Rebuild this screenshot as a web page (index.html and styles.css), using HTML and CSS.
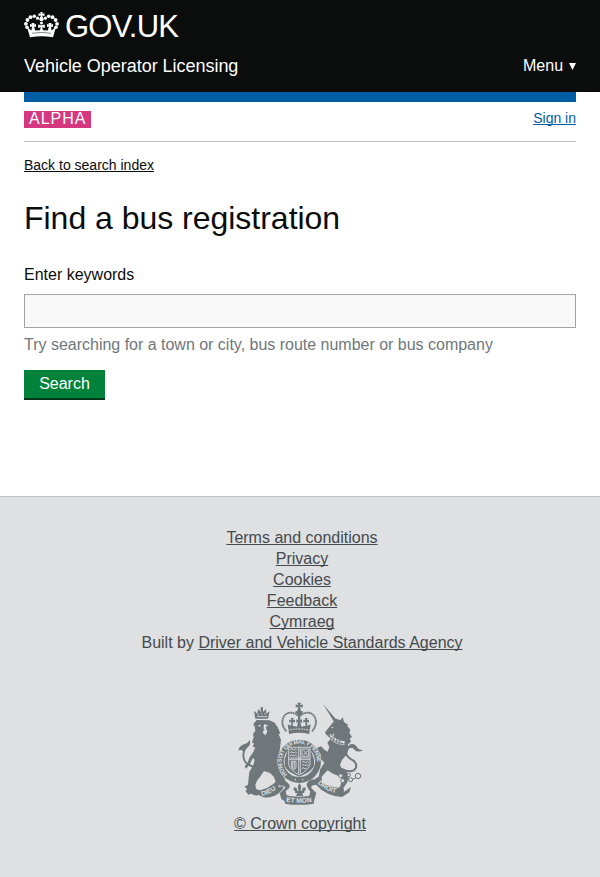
FILE: index.html
```html
<!DOCTYPE html>
<html lang="en">
<head>
<meta charset="utf-8">
<title>Find a bus registration</title>
<link rel="stylesheet" href="styles.css">
</head>
<body>
<header class="header">
  <div class="brand">
    <svg class="crown" viewBox="0 0 35 27" fill="#fff" aria-hidden="true">
      <path d="M16.3 0h2.400l-.5 1.800 2.300-.5v2.600l-2.300-.5.6 2.600h-2.600l.6-2.600-2.300.5V1.300l2.300.5z"/>
      <circle cx="17.500" cy="7.200" r="2.100"/><circle cx="17.500" cy="11" r="1.500"/>
      <circle cx="13.600" cy="6.200" r="1.600"/><circle cx="10.300" cy="4.300" r="1.800"/><circle cx="6.500" cy="5.200" r="1.900"/><circle cx="3.400" cy="8" r="1.900"/><circle cx="1.900" cy="11.800" r="1.900"/><circle cx="3" cy="15.300" r="1.800"/>
      <circle cx="21.400" cy="6.200" r="1.600"/><circle cx="24.700" cy="4.300" r="1.800"/><circle cx="28.500" cy="5.200" r="1.900"/><circle cx="31.600" cy="8" r="1.900"/><circle cx="33.100" cy="11.800" r="1.900"/><circle cx="32" cy="15.300" r="1.800"/>
      <path d="M3 15l4.500 3.500.5-4-2 .5v-3l2 .5-.5-1.500h3l-.5 1.500 2-.5v3l-2-.5 1.300 4 4.700-.3.800-3-2.600.8v-3.500l2.600.7h1.400l2.600-.7V16l-2.600-.8.8 3 4.700.3 1.300-4-2 .5v-3l2 .5-.5-1.500h3l-.5 1.500 2-.5v3l-2-.5.5 4L32 15l-3 10.300q-11.500-2-23 0z"/>
      <path d="M8 21.300q9.500-1.800 19 0" fill="none" stroke="#0b0c0c" stroke-width=".5"/>
    </svg>
    <span class="brand-name">GOV.UK</span>
  </div>
  <div class="service">
    <span class="service-name">Vehicle Operator Licensing</span>
    <span class="menu">Menu <svg class="arrow" viewBox="0 0 7 8" fill="#fff" aria-hidden="true"><path d="M0 0h7L3.500 7z"/></svg></span>
  </div>
</header>
<main class="main">
  <div class="bar"></div>
  <div class="phase"><span class="tag">ALPHA</span><a class="sign-in" href="#">Sign in</a></div>
  <a class="back" href="#">Back to search index</a>
  <h1 class="title">Find a bus registration</h1>
  <form class="form">
    <label class="label" for="keywords">Enter keywords</label>
    <input class="input" id="keywords" type="text">
    <p class="hint">Try searching for a town or city, bus route number or bus company</p>
    <button class="button" type="button">Search</button>
  </form>
</main>
<footer class="footer">
  <ul class="links">
    <li><a href="#">Terms and conditions</a></li>
    <li><a href="#">Privacy</a></li>
    <li><a href="#">Cookies</a></li>
    <li><a href="#">Feedback</a></li>
    <li><a href="#">Cymraeg</a></li>
    <li class="built">Built by <a class="agency" href="#">Driver and Vehicle Standards Agency</a></li>
  </ul>
  <svg class="crest" viewBox="12 6 375 309" fill="#6f777b" aria-hidden="true">
    <defs>
      <path id="ring" d="M160 223A53 53 0 1 1 232 223"/>
      <path id="left" d="M84 288q30-6 54-32"/>
      <path id="base" d="M156 305q42 7 86 0"/>
      <path id="right" d="M251 250q24 24 60 30"/>
    </defs>
    <!-- Lion -->
    <path d="M64 56l-4-24 10 9 2-14 8 9 0-14h7l0 14 9-9 1 14 10-8-5 23z"/>
    <path d="M69 49l31 1M71 41l3 4M81 39l3 4M91 41l5 1" stroke="#dee0e2" stroke-width="2.500"/>
    <path d="M68 60L106 61 122 68 131 82 139 100 134 103 141 119 134 180 140 215 150 232 157 250 141 258 127 251 120 231 108 219 90 213 80 228 69 242 64 254 66 266 78 272 79 283 66 287 51 281 43 284 35 274 39 266 31 260 42 254 44 234 46 216 58 196 62 180 57 173 49 190 37 206 32 199 40 190 47 172 58 156 64 142 56 141 60 130 54 128 59 112 57 102 64 92 62 80 58 72z"/>
    <path d="M60 201q-31-8-32-34 0-17 13-30" fill="none" stroke="#6f777b" stroke-width="5.500"/>
    <path d="M13 152q3-15 17-19 12-4 18-13 3 14-7 22-8 4-12 14-6-10-16-4z"/>
    <path d="M72 76l8-2-2 8zM90 73l13 3-8 5 5 14-6 11-8-8z" fill="#dee0e2"/>
    <path d="M79 80l10-1-2 6 6 3-5 2 2 5-9-5-5 3z"/>
    <!-- Royal crown -->
    <path d="M190 8h11l-3 8 8-3v10l-8-3 3 12 8 4-10 9h-7l-10-9 8-4 3-12-8 3V13l8 3z"/>
    <path d="M157 94C128 62 157 19 192 47M234 94c29-32 0-75-35-47" fill="none" stroke="#6f777b" stroke-width="5.500" stroke-dasharray="5.500 1"/>
    <path d="M192 42h7v19l5-4v12l-5-3 3 14 13-3-1-12-6 3v-9l6 1-2-6h9l-2 6 6-1v9l-6-3 1 12 10-4-4 29q-30-8-61 0l-4-29 10 4 1-12-6 3v-9l6 1-2-6h9l-2 6 6-1v9l-6-3-1 12 13 3 3-14-5 3V57l5 4z"/>
    <path d="M161 91q34-8 69 0" fill="none" stroke="#dee0e2" stroke-width="3" stroke-dasharray="5 3"/>
    <!-- Unicorn -->
    <path d="M267 12l41 48-8 5z"/>
    <path d="M298 66l9-10 12 5 7-9 4 14 12 8-2 5 9 10-3 9 8 14-7 3 4 10-10 9 4 11-8 20-13 15-6 14 4 9 15 9 8 18-6 18-11 16 3 8-16 4-7-6 11-12 6-20-9-9-19-8-16-10-8 8-10 11 1 13-12 8-10-7 3-9 9-5 5-23 12-18-6-8-21 7-8 12-11-7 6-10 18-13 12-6-8-8-15 6-10 2-9 7-7-7 5-5-10-8 8-5-2-9 8-3 10 10 12 2 18-7 10 10 10 6 5-14-6-13 9-11 11-9 1-8-12 7-12-1-4-9z"/>
    <path d="M285 105q19 23 47 25" fill="none" stroke="#dee0e2" stroke-width="12"/>
    <path d="M283 106q19 23 49 26" fill="none" stroke="#6f777b" stroke-width="5" stroke-dasharray="7 2"/>
    <path d="M285 97l4 12 7-7 2 14 9-6 1 14 9-5 1 10" fill="none" stroke="#6f777b" stroke-width="2"/>
    <path d="M322 207c50 22 55-19 30-29-25-14-16-41 6-37" fill="none" stroke="#6f777b" stroke-width="6"/>
    <path d="M344 135q17-8 25 6 4 9 18 9-14 10-26-1-6-9-17-5z"/>
    <path d="M291 82l8-2-4 5z" fill="#dee0e2"/>
    <g fill="#dee0e2" stroke="#6f777b" stroke-width="3"><circle cx="320" cy="227" r="6"/><circle cx="326" cy="242" r="6"/><circle cx="344" cy="225" r="5"/><circle cx="350" cy="239" r="6"/><circle cx="372" cy="228" r="8"/><path d="M332 240l12-2M356 238l10-5"/></g>
    <!-- Garter and shield -->
    <circle cx="196" cy="184" r="66" fill="#dee0e2"/>
    <circle cx="196" cy="184" r="65"/>
    <circle cx="196" cy="184" r="47" fill="#dee0e2"/>
    <text class="garter"><textPath href="#ring">HONI SOIT QUI MAL Y PENSE</textPath></text>
    <path d="M163 146q33-19 66 0l11 32v20q-10 20-44 32-34-12-44-32v-20z"/>
    <g fill="none" stroke="#dee0e2" stroke-width="2.500">
      <path d="M164 142h64v53q-9 19-32 30-23-11-32-30zM194 142v80M199 142v80M164 174h64M164 179h64"/>
      <path d="M168 149l6-3 3 4 8-3 4 4M168 158l6-3 3 4 8-3 4 4M168 167l6-3 3 4 8-3 4 4M204 147h20v22h-20zM209 152l11 13M220 152l-11 13M172 184h14v18q-4 7-8 7-6-5-6-13zM176 185v20M181 185v22M204 187l6-3 3 4 8-3 4 4M204 196l6-3 3 4 8-3 3 4M203 206l6-3 3 4 6-3"/>
    </g>
    <g fill="#dee0e2"><circle cx="184" cy="239" r="2.200"/><circle cx="206" cy="239" r="2.200"/></g>
    <!-- Motto scroll -->
    <path d="M51 275q52-3 79-34l4 20 17-3q-12 24-34 31-13 5-29 3z"/>
    <path d="M132 243q22-5 34 11 4 8-5 14l-6 6 3 12 10 5-5 19-21-13-5-17 12-12q12-8-4-12-10-2-12 2zM249 238q-25-2-31 14-1 8 5 14l6 9-3 12-8 5 4 18 20-14 5-17-13-13q-7-7 5-11 8-2 12 0z"/>
    <path d="M250 237q27 24 62 26l19 12 20-14-5 16-22 14q-48-3-77-36z"/>
    <path d="M149 285q47 10 94 0l-4 26q-44 7-86 0z"/>
    <path d="M196 250q10 11 3 21l5 2q1-12 9-11 6 6-3 13l1 4-7 1 4 8h-22l4-8-7-1 1-4q-9-7-3-13 8-1 9 11l4-2q-6-10 2-21z"/>
    <g class="motto"><text><textPath href="#left">DIEU</textPath></text><text><textPath href="#base">ET MON</textPath></text><text><textPath href="#right">DROIT</textPath></text></g>
  </svg>
  <a class="copyright" href="#">© Crown copyright</a>
</footer>
</body>
</html>
```

FILE: styles.css
```css
* { box-sizing: border-box; }
body {
  margin: 0;
  min-height: 877px;
  display: flex;
  flex-direction: column;
  background: #fff;
  color: #0b0c0c;
  font: 16px/20px "Liberation Sans", Helvetica, Arial, sans-serif;
}
.header { height: 92px; padding: 12px 24px 0; background: #0b0c0c; color: #fff; }
.brand { display: flex; height: 30px; gap: 6px; }
.crown { width: 35px; height: 27px; }
.brand-name { font-size: 31px; line-height: 30px; letter-spacing: -0.750px; }
.service { display: flex; justify-content: space-between; margin-top: 14px; }
.service-name { font-size: 18px; letter-spacing: -0.030px; }
.arrow { width: 7px; height: 8px; margin: 0 0.500px 0 1px; vertical-align: 0; }
.main { height: 404px; padding: 0 24px; }
.bar { height: 10px; background: #005ea5; }
.phase { display: flex; justify-content: space-between; height: 40px; padding-top: 9px; border-bottom: 1px solid #bfc1c3; }
.tag { height: 17px; width: 67px; padding-left: 5px; background: #d53880; color: #fff; font-size: 16px; line-height: 16px; letter-spacing: 1px; }
.sign-in { color: #005ea5; font-size: 14px; line-height: 15px; }
.back { display: block; width: max-content; margin-top: 15px; color: #0b0c0c; font-size: 14px; line-height: 16px; }
a { text-decoration-thickness: 1px; text-underline-offset: 1px; text-decoration-skip-ink: none; }
.title { margin: 28px 0 0; font-size: 32px; font-weight: 400; line-height: 35px; letter-spacing: -0.020px; }
.label { display: block; margin-top: 29px; }
.input { display: block; width: 100%; height: 34px; margin-top: 9px; border: 1px solid #a1a3a4; background: #f8f8f8; }
.hint { margin: 7px 0 0; color: #6f777b; letter-spacing: -0.010px; }
.button { display: block; width: 81px; height: 30px; margin-top: 15px; padding: 0; border: 0; border-bottom: 2px solid #003618; background: #00823b; color: #fff; font: inherit; }
.footer { flex: 1; display: flex; flex-direction: column; align-items: center; padding-top: 30px; border-top: 1px solid #bfc1c3; background: #dee0e2; color: #454a4c; }
.footer a { color: #454a4c; }
.links { margin: 0; padding: 0 0 0 4px; list-style: none; text-align: center; line-height: 21px; }
.crest { width: 125px; height: 103px; margin-top: 49px; overflow: visible; }
.garter { font-size: 17px; font-weight: 700; letter-spacing: -1.200px; fill: #dee0e2; }
.motto { font-size: 20px; font-weight: 700; fill: #dee0e2; }
.copyright { margin-top: 9px; }
```
